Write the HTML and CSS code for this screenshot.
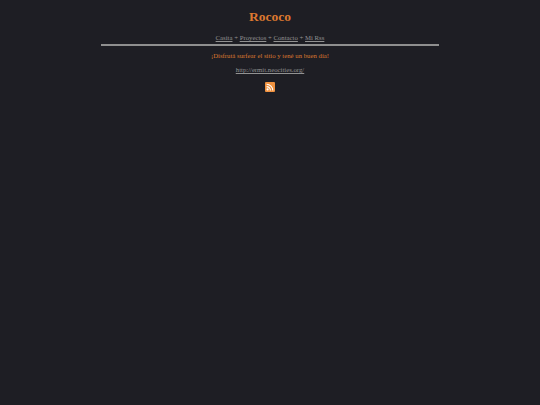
FILE: index.html
```html
<!DOCTYPE html>
<html lang="es">
<head>
  <meta charset="UTF-8" />
  <title>Rococo</title>
  <link rel="stylesheet" href="styles.css">
</head>
<body>
  <div class="container">
    <h1>Rococo</h1>
    <p class="nav"><a href="#">Casita</a> + <a href="#">Proyectos</a> + <a href="#">Contacto</a> + <a href="#">Mi Rss</a></p>
    <hr>
    <p class="welcome">¡Disfrutá surfear el sitio y tené un buen día!</p>
    <p class="url"><a href="#">http://ermit.neocities.org/</a></p>
    <a class="rss" href="#">
      <svg width="10" height="10" viewBox="0 0 10 10">
        <rect width="10" height="10" rx="1" fill="#f0923f"/>
        <circle cx="2.6" cy="7.4" r="1.1" fill="#fff"/>
        <path d="M1.6 4.6a3.8 3.8 0 0 1 3.8 3.8M1.6 2.2a6.2 6.2 0 0 1 6.2 6.2" fill="none" stroke="#fff" stroke-width="1.1"/>
      </svg>
    </a>
  </div>
</body>
</html>
```

FILE: styles.css
```css
body {
  margin: 0;
  background: #1e1e24;
  color: #929292;
  font-family: "Liberation Serif", serif;
  font-size: 6.75px;
  text-align: center;
}

.container {
  width: 338px;
  margin: 0 auto;
  padding-top: 10px;
}

h1 {
  margin: 0 0 9px;
  font-size: 13.5px;
  line-height: 14px;
  color: #dc7830;
}

p {
  margin: 0;
  line-height: 9px;
}

a {
  color: #929292;
}

hr {
  height: 2px;
  margin: 2px 0 5px;
  border: none;
  background: #8f8f8f;
}

.welcome {
  color: #dc7830;
  margin-bottom: 5px;
}

.url {
  margin-bottom: 8px;
}

.rss {
  display: block;
  line-height: 0;
}
```
